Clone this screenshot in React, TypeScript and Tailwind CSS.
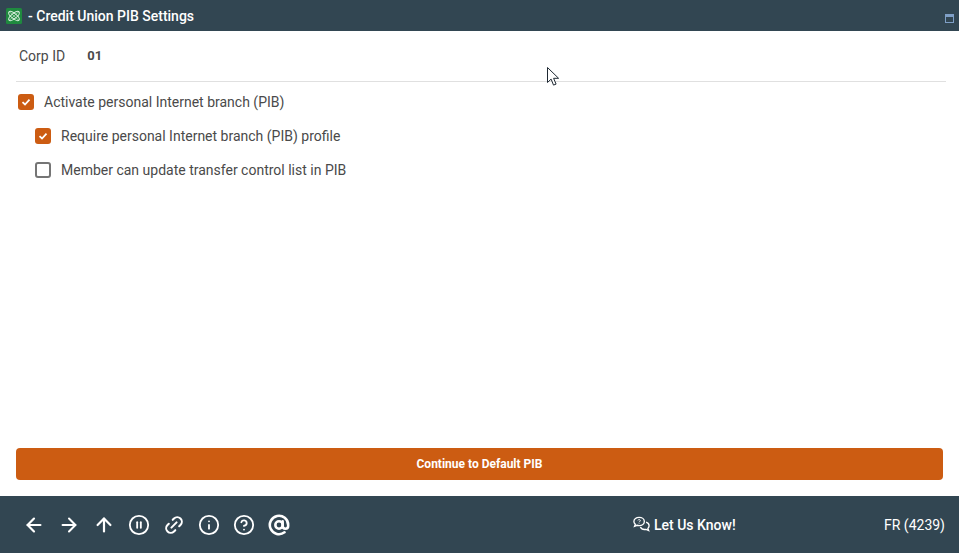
import { ArrowLeft, ArrowRight, ArrowUp, AtSign, CircleHelp, CirclePause, Info, Link2 } from "lucide-react";

function Checkbox({ checked = false }: { checked?: boolean }) {
  if (!checked) {
    return <span className="block size-4 rounded-[3px] border-2 border-[#757575] bg-white" />;
  }
  return (
    <span className="flex size-4 items-center justify-center rounded-[3px] bg-[#cc5c12]">
      <svg className="size-[10px] text-white" viewBox="0 0 10 10" fill="none" stroke="currentColor" strokeWidth="1.8">
        <path d="M1.5 5.2 4 7.5 8.5 2.6" />
      </svg>
    </span>
  );
}

function CheckRow({ label, checked, nested }: { label: string; checked?: boolean; nested?: boolean }) {
  return (
    <div className={`flex h-[34px] items-center ${nested ? "pl-[19px] gap-[10px]" : "pl-[2px] gap-[10px]"}`}>
      <Checkbox checked={checked} />
      <span className="text-sm text-[#4a4a4a]">{label}</span>
    </div>
  );
}

function AppLogo() {
  return (
    <svg className="size-4" viewBox="0 0 16 16" fill="none">
      <rect width="16" height="16" rx="1.5" fill="#1f8a3f" />
      <g stroke="#d9f0df" strokeWidth="1" fill="none">
        <ellipse cx="8" cy="8" rx="6.5" ry="2.6" transform="rotate(40 8 8)" />
        <ellipse cx="8" cy="8" rx="6.5" ry="2.6" transform="rotate(-40 8 8)" />
        <path d="M3 3.5 8 8l5-4.5M3 12.5 8 8l5 4.5" strokeWidth="0.6" />
      </g>
    </svg>
  );
}

export default function App() {
  return (
    <div className="flex h-[553px] w-[959px] flex-col overflow-hidden bg-white font-['Roboto',sans-serif]">
      <header className="flex h-[31px] shrink-0 items-center bg-[#324652] pl-[6px] pr-[5px]">
        <AppLogo />
        <span className="ml-[6px] text-sm font-medium text-white">- Credit Union PIB Settings</span>
        <span className="mt-[5px] ml-auto block h-[9px] w-[9px] border border-[#7f9fc6] border-t-[3px]" />
      </header>

      <main className="relative flex flex-1 flex-col px-4">
        <div className="mr-[-3px] flex h-[51px] items-center gap-[22px] border-b border-[#e0e0e0] pl-[3px] pt-[-1px]">
          <span className="text-sm text-[#4a4a4a]">Corp ID</span>
          <span className="text-[13px] font-bold text-[#4a4a4a]">01</span>
        </div>

        <div className="pt-[3px]">
          <CheckRow label="Activate personal Internet branch (PIB)" checked />
          <CheckRow label="Require personal Internet branch (PIB) profile" checked nested />
          <CheckRow label="Member can update transfer control list in PIB" nested />
        </div>

        <button className="mt-auto mb-4 h-8 w-[927px] rounded-[4px] bg-[#cc5c12] text-xs font-bold text-white">
          Continue to Default PIB
        </button>

        {/* mouse pointer captured in the screenshot */}
        <svg className="absolute left-[547px] top-[36px] h-[20px] w-[13px]" viewBox="0 0 13 20" fill="white" stroke="#1f2933" strokeWidth="1">
          <path d="M0.5 0.5v15l3.6-3.4 2.4 6 2.6-1-2.5-5.800h5z" />
        </svg>
      </main>

      <footer className="flex h-[57px] shrink-0 items-center bg-[#324652] pl-[23px] pr-[14px] text-white">
        <div className="flex items-center gap-[13px]">
          <ArrowLeft className="size-[22px]" strokeWidth={2.4} />
          <ArrowRight className="size-[22px]" strokeWidth={2.2} />
          <ArrowUp className="size-[22px]" strokeWidth={2.4} />
          <CirclePause className="size-[22px]" strokeWidth={2} />
          <Link2 className="size-[22px] -rotate-45" strokeWidth={2.2} />
          <Info className="size-[22px]" strokeWidth={2} />
          <CircleHelp className="size-[22px]" strokeWidth={2} />
          <AtSign className="size-[22px]" strokeWidth={2.8} />
        </div>
        <div className="ml-[342px] flex items-center gap-[3px]">
          <svg className="size-[19px]" viewBox="0 0 20 20" fill="none" stroke="currentColor" strokeWidth="1.4">
            <path d="M7.500 2.500c-3 0-5.500 1.800-5.500 4.300 0 1.200.6 2.200 1.500 3l-.8 2 2.600-1c.7.200 1.400.3 2.200.3 3 0 5.500-1.800 5.500-4.300s-2.500-4.300-5.500-4.300z" />
            <path d="M14.800 7.500c1.900.6 3.200 2 3.200 3.800 0 1.100-.5 2-1.300 2.800l.8 2.200-2.700-1.200c-2.400.5-5.100-.5-6-2.500" />
            <path d="M6.200 5.600c.3-1 2.600-1 2.600.3 0 .9-1.300.9-1.300 1.800M7.500 8.500v.6" strokeWidth="1" />
          </svg>
          <span className="text-sm font-medium">Let Us Know!</span>
        </div>
        <span className="ml-auto text-sm">FR (4239)</span>
      </footer>
    </div>
  );
}
